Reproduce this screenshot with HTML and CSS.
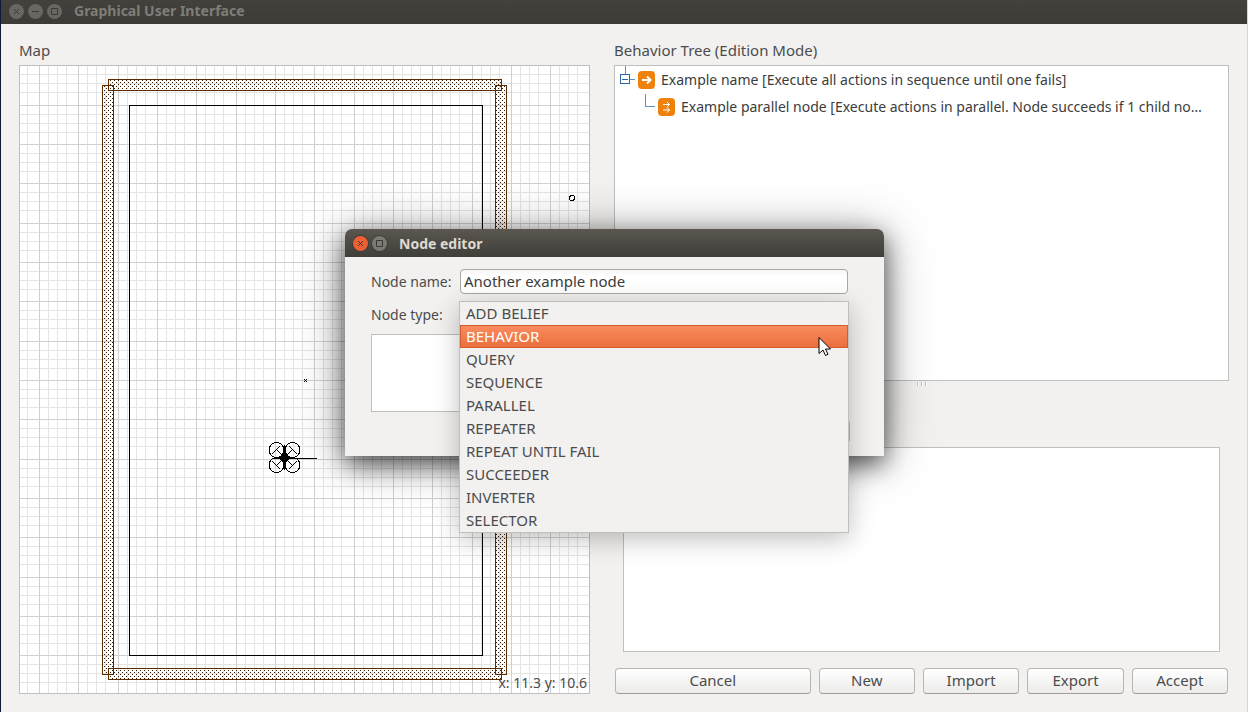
FILE: index.html
```html
<!DOCTYPE html>
<html lang="en">
<head>
<meta charset="utf-8">
<title>Graphical User Interface</title>
<link rel="stylesheet" href="styles.css">
</head>
<body>
<div class="window">
  <header class="titlebar">
    <button class="win-btn" aria-label="Close window"><svg viewBox="0 0 15 15"><path d="M5 5l5 5M10 5l-5 5"/></svg></button>
    <button class="win-btn" aria-label="Minimize window"><svg viewBox="0 0 15 15"><path d="M4 7.5h7"/></svg></button>
    <button class="win-btn" aria-label="Maximize window"><svg viewBox="0 0 15 15"><path d="M4.500 4.500h6v6h-6z"/></svg></button>
    <h1 class="title">Graphical User Interface</h1>
  </header>
  <main class="content">
    <section class="panel">
      <h2 class="label">Map</h2>
      <div class="map">
        <svg class="map-canvas" shape-rendering="crispEdges">
          <defs>
            <pattern id="grid" x="19" y="39" width="118" height="118" patternUnits="userSpaceOnUse">
              <path class="minor" d="M9.500 0v118M18.500 0v118M27.500 0v118M48.500 0v118M57.500 0v118M66.500 0v118M88.500 0v118M97.500 0v118M106.500 0v118M0 9.500h118M0 18.500h118M0 27.500h118M0 48.500h118M0 57.500h118M0 66.500h118M0 87.500h118M0 96.500h118M0 105.500h118"/>
              <path class="major" d="M.5 0v118M39.500 0v118M79.500 0v118M0 .5h118M0 39.500h118M0 78.500h118"/>
            </pattern>
            <pattern id="dots" width="4" height="4" patternUnits="userSpaceOnUse">
              <rect class="dot" x="0" y="0" width="1" height="1"/><rect class="dot" x="2" y="2" width="1" height="1"/>
            </pattern>
          </defs>
          <rect width="100%" height="100%" fill="url(#grid)"/>
          <g class="wall">
            <rect x="88.500" y="13.500" width="393" height="11"/>
            <rect x="82.500" y="19.500" width="11" height="589"/>
            <rect x="475.500" y="19.500" width="11" height="589"/>
            <rect x="88.500" y="602.500" width="393" height="11"/>
          </g>
          <rect class="ink" x="109.500" y="39.500" width="353" height="550"/>
          <circle class="ink" cx="552" cy="132" r="2.500"/>
          <path class="ink" d="M284 313l3 3M287 313l-3 3"/>
          <g class="ink">
            <circle cx="256.500" cy="384" r="7.500"/><circle cx="272.500" cy="384" r="7.500"/>
            <circle cx="256.500" cy="399" r="7.500"/><circle cx="272.500" cy="399" r="7.500"/>
            <path d="M252 388l8-8M269 380l8 8M252 395l8 8M269 403l8-8M257 384l15 15M272 384l-15 15M264.500 379v25M253 392.500h44"/>
          </g>
          <path d="M265 385l2 4 4 3-4 3-2 4-2-4-5-3 5-3z"/>
        </svg>
        <output class="coords">x: 11.3 y: 10.6</output>
      </div>
    </section>
    <section class="panel">
      <h2 class="label">Behavior Tree (Edition Mode)</h2>
      <div class="tree" role="tree">
        <div class="node" role="treeitem" aria-expanded="true">
          <svg class="branch" width="18" height="27" shape-rendering="crispEdges"><path class="link" d="M10.500 0v9M15 13.500h5"/><rect class="box" x="5.500" y="8.500" width="9" height="9"/><path class="box" d="M7 13.500h6"/></svg>
          <svg class="icon" viewBox="0 0 17 18"><rect width="17" height="18" rx="4"/><path d="M4 9h8.500M9 5.500l3.500 3.500-3.500 3.500"/></svg>
          <span class="node-text">Example name [Execute all actions in sequence until one fails]</span>
        </div>
        <div class="node child" role="treeitem">
          <svg class="branch" width="18" height="27" shape-rendering="crispEdges"><path class="link" d="M10.500 1v12.500h9"/></svg>
          <svg class="icon thin" viewBox="0 0 17 18"><rect width="17" height="18" rx="4"/><path d="M5 6.500h6.500M9 4l2.500 2.500L9 9M5 12h6.500M9 9.500l2.500 2.500-2.500 2.500"/></svg>
          <span class="node-text">Example parallel node [Execute actions in parallel. Node succeeds if 1 child no…</span>
        </div>
      </div>
      <div class="splitter"><i></i><i></i><i></i></div>
      <textarea class="details" aria-label="Details"></textarea>
      <div class="actions">
        <button class="btn wide">Cancel</button>
        <button class="btn">New</button>
        <button class="btn">Import</button>
        <button class="btn">Export</button>
        <button class="btn">Accept</button>
      </div>
    </section>
  </main>
</div>

<div class="dialog" role="dialog" aria-labelledby="dialog-title">
  <header class="titlebar active">
    <button class="win-btn close" aria-label="Close"><svg viewBox="0 0 15 15"><path d="M5 5l5 5M10 5l-5 5"/></svg></button>
    <button class="win-btn" aria-label="Maximize"><svg viewBox="0 0 15 15"><path d="M4.500 4.500h6v6h-6z"/></svg></button>
    <h2 class="title" id="dialog-title">Node editor</h2>
  </header>
  <form class="form">
    <label class="label" for="name">Node name:</label>
    <input class="field" id="name" type="text" value="Another example node">
    <label class="label" for="type">Node type:</label>
    <div class="combo">
      <select class="field" id="type"></select>
      <ul class="popup" role="listbox">
        <li>ADD BELIEF</li>
        <li class="selected">BEHAVIOR</li>
        <li>QUERY</li>
        <li>SEQUENCE</li>
        <li>PARALLEL</li>
        <li>REPEATER</li>
        <li>REPEAT UNTIL FAIL</li>
        <li>SUCCEEDER</li>
        <li>INVERTER</li>
        <li>SELECTOR</li>
      </ul>
    </div>
    <textarea class="notes" aria-label="Description"></textarea>
    <button class="btn confirm" type="button" aria-label="Confirm"></button>
  </form>
</div>
<svg class="cursor" width="14" height="21" viewBox="0 0 14 21"><path d="M1 1.500v16l4-3.500 2.500 5.500 2.500-1.200-2.500-5.300h5z"/></svg>
</body>
</html>
```
FILE: styles.css
```css
* { box-sizing: border-box; }
body {
  margin: 0;
  background: #f2f1f0;
  color: #4c4c4c;
  font: 15px/20px "Noto Sans", "Open Sans", sans-serif;
}
button, input, select, textarea { font: inherit; color: inherit; margin: 0; }
h1, h2, ul { margin: 0; padding: 0; font: inherit; }

.window {
  display: flex;
  flex-direction: column;
  min-height: 100vh;
  border-left: 1px solid #0b1c38;
  border-right: 1px solid #d5d5d4;
}
.titlebar {
  display: flex;
  align-items: center;
  gap: 4px;
  height: 24px;
  padding: 0 8px 2px;
  background: linear-gradient(#42413c, #3c3b37);
  color: #807d78;
}
.title { margin-left: 8px; font-size: 14px; font-weight: 700; }
.win-btn {
  width: 15px;
  height: 15px;
  padding: 0;
  border: 0;
  border-radius: 50%;
  background: #696761;
}
.win-btn svg { display: block; fill: none; stroke: #3b3a36; stroke-width: 1; }

.content {
  flex: 1;
  display: grid;
  grid-template-columns: 571fr 615fr;
  gap: 24px;
  padding: 16px 18px 18px;
}
.panel { display: flex; flex-direction: column; min-width: 0; }
.label { line-height: 20px; }
.panel > .label { padding-bottom: 5px; }
.map {
  position: relative;
  flex: 1;
  border: 1px solid #c1bfbb;
  background: #fff;
}
.map-canvas { position: absolute; inset: 0; width: 100%; height: 100%; }
.minor { stroke: #e4e4e4; }
.major { stroke: #d0d0d0; }
.dot { fill: #3c1a00; }
.wall { fill: url(#dots); stroke: #5b2c00; }
.ink { fill: none; stroke: #000; }
.coords { position: absolute; right: 2px; bottom: 1px; font-size: 14px; line-height: 18px; }

.tree {
  height: 316px;
  border: 1px solid #c1bfbb;
  background: #fff;
  color: #3c3c3c;
}
.node { display: flex; align-items: center; height: 27px; padding-right: 6px; font-size: 14px; }
.child { padding-left: 20px; }
.branch { flex: none; overflow: visible; margin-right: 5px; }
.link { fill: none; stroke: #5d8fc9; }
.box { fill: none; stroke: #2f66a8; }
.icon { flex: none; width: 17px; height: 18px; margin-right: 6px; fill: #ee820c; }
.icon path { fill: none; stroke: #fff; stroke-width: 2; }
.icon.thin path { stroke-width: 1; }
.node-text { overflow: hidden; line-height: 18px; white-space: nowrap; text-overflow: ellipsis; }
.splitter { display: flex; justify-content: center; gap: 2px; height: 66px; padding-top: 1px; }
.splitter i { width: 2px; height: 4px; border-left: 1px solid #c4c3c1; background: #fff; }
.details, .notes { resize: none; border: 1px solid #c1bfbb; background: #fff; }
.details { flex: 1; margin: 0 9px 16px; }
.actions { display: flex; gap: 8px; height: 26px; padding: 0 1px; }
.btn {
  flex: 96 1 0;
  min-width: 0;
  padding: 0 0 2px;
  border: 1px solid #b9b6b2;
  border-bottom-color: #a09d99;
  border-radius: 4px;
  background: linear-gradient(#fff, #ecebea);
}
.wide { flex-grow: 197; }

.dialog {
  position: absolute;
  left: 345px;
  top: 229px;
  width: 539px;
  border-radius: 7px 7px 0 0;
  background: #f2f1f0;
  box-shadow: 0 8px 24px rgba(0, 0, 0, .6), 0 4px 50px rgba(0, 0, 0, .35);
}
.active {
  height: 28px;
  padding-bottom: 0;
  border-radius: 7px 7px 0 0;
  background: linear-gradient(#5a574f, #3f3e39);
  color: #dfdbd2;
}
.active .title { line-height: 18px; padding-top: 2px; }
.active .win-btn { background: #7c7a73; box-shadow: 0 0 0 1px #403f3a; }
.active .close { background: #ee5f34; }
.form {
  display: grid;
  grid-template-columns: 81px 1fr;
  gap: 8px;
  padding: 12px 36px 13px 26px;
}
.form .label { font-size: 14px; line-height: 25px; white-space: nowrap; }
.field {
  display: block;
  width: 100%;
  height: 25px;
  padding: 0 3px 1px;
  border: 1px solid #aaa6a0;
  border-radius: 4px;
  background: linear-gradient(#f6f6f6, #fff 6px);
  color: #3c3c3c;
}
.combo { position: relative; height: 24px; }
.popup {
  position: absolute;
  top: -1px;
  left: -1px;
  right: -1px;
  border: 1px solid #c1bfbb;
  background: #f2f1f0;
  box-shadow: 0 6px 24px rgba(0, 0, 0, .25);
  list-style: none;
}
.form .label + .combo { margin-bottom: 0; }
.popup li { height: 23px; padding: 0 6px; line-height: 23px; }
.popup .selected {
  border: 1px solid #cf5e31;
  padding: 0 5px;
  line-height: 21px;
  background: linear-gradient(#f98b5e, #ec6f3d);
  color: #fff;
}
.notes { grid-column: 1 / -1; height: 78px; margin: -1px 1px 0 0; }
.confirm { grid-column: 2; justify-self: end; width: 90px; height: 23px; margin-right: -2px; }
.cursor { position: absolute; left: 818px; top: 336px; fill: #fff; stroke: #000; }
```
